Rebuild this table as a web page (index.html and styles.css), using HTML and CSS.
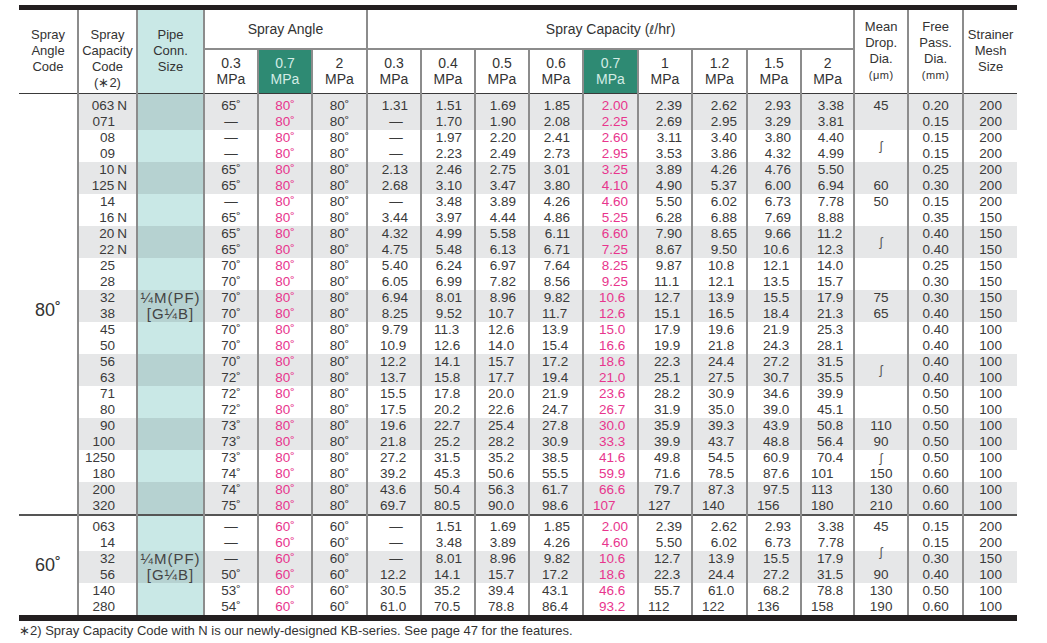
FILE: index.html
```html
<!DOCTYPE html>
<html lang="en">
<head>
<meta charset="utf-8">
<title>Spray nozzle specifications</title>
<link rel="stylesheet" href="styles.css">
</head>
<body>
<div class="sheet">
<table class="spec">
<colgroup>
<col style="width:59px"><col style="width:59px"><col style="width:67px">
<col style="width:54px"><col style="width:54px"><col style="width:55px">
<col style="width:54px"><col style="width:54px"><col style="width:54px"><col style="width:54px">
<col style="width:55px"><col style="width:54px"><col style="width:55px"><col style="width:54px"><col style="width:53px">
<col style="width:54px"><col style="width:55px"><col style="width:54px">
</colgroup>
<thead>
<tr class="h1">
<th rowspan="2" class="rs">Spray<br>Angle<br>Code</th>
<th rowspan="2" class="rs code-h">Spray<br>Capacity<br>Code<br>(∗2)</th>
<th rowspan="2" class="rs pipe-h">Pipe<br>Conn.<br>Size</th>
<th colspan="3" class="grp">Spray Angle</th>
<th colspan="9" class="grp">Spray Capacity (<span class="ell">ℓ</span>/hr)</th>
<th rowspan="2" class="rs">Mean<br>Drop.<br>Dia.<br><span class="unit">(<i class="mu">μ</i>m)</span></th>
<th rowspan="2" class="rs">Free<br>Pass.<br>Dia.<br><span class="unit">(mm)</span></th>
<th rowspan="2" class="rs">Strainer<br>Mesh<br>Size</th>
</tr>
<tr class="h2">
<th>0.3<br>MPa</th><th class="hl">0.7<br>MPa</th><th>2<br>MPa</th>
<th>0.3<br>MPa</th><th>0.4<br>MPa</th><th>0.5<br>MPa</th><th>0.6<br>MPa</th><th class="hl">0.7<br>MPa</th><th>1<br>MPa</th><th>1.2<br>MPa</th><th>1.5<br>MPa</th><th>2<br>MPa</th>
</tr>
</thead>
<tbody class="g80">
<tr class="s">
<td></td><td>063<span class="n">N</span><br>071</td><td></td>
<td>65˚<br>—</td><td>80˚<br>80˚</td><td>80˚<br>80˚</td>
<td>1.31<span class="c">—</span></td><td>1.51<br>1.70</td><td>1.69<br>1.90</td><td>1.85<br>2.08</td>
<td>2.00<br>2.25</td><td>2.39<br>2.69</td><td>2.62<br>2.95</td><td>2.93<br>3.29</td><td>3.38<br>3.81</td>
<td>45<br>&nbsp;</td><td>0.20<br>0.15</td><td>200<br>200</td>
</tr>
<tr>
<td></td><td>08<br>09</td><td></td>
<td>—<br>—</td><td>80˚<br>80˚</td><td>80˚<br>80˚</td>
<td><span class="c">—</span><span class="c">—</span></td><td>1.97<br>2.23</td><td>2.20<br>2.49</td><td>2.41<br>2.73</td>
<td>2.60<br>2.95</td><td>3.11<br>3.53</td><td>3.40<br>3.86</td><td>3.80<br>4.32</td><td>4.40<br>4.99</td>
<td class="mid"><span class="tl">ʃ</span></td><td>0.15<br>0.15</td><td>200<br>200</td>
</tr>
<tr class="s">
<td></td><td>10<span class="n">N</span><br>125<span class="n">N</span></td><td></td>
<td>65˚<br>65˚</td><td>80˚<br>80˚</td><td>80˚<br>80˚</td>
<td>2.13<br>2.68</td><td>2.46<br>3.10</td><td>2.75<br>3.47</td><td>3.01<br>3.80</td>
<td>3.25<br>4.10</td><td>3.89<br>4.90</td><td>4.26<br>5.37</td><td>4.76<br>6.00</td><td>5.50<br>6.94</td>
<td>&nbsp;<br>60</td><td>0.25<br>0.30</td><td>200<br>200</td>
</tr>
<tr>
<td></td><td>14<br>16<span class="n">N</span></td><td></td>
<td>—<br>65˚</td><td>80˚<br>80˚</td><td>80˚<br>80˚</td>
<td><span class="c">—</span>3.44</td><td>3.48<br>3.97</td><td>3.89<br>4.44</td><td>4.26<br>4.86</td>
<td>4.60<br>5.25</td><td>5.50<br>6.28</td><td>6.02<br>6.88</td><td>6.73<br>7.69</td><td>7.78<br>8.88</td>
<td>50<br>&nbsp;</td><td>0.15<br>0.35</td><td>200<br>150</td>
</tr>
<tr class="s">
<td></td><td>20<span class="n">N</span><br>22<span class="n">N</span></td><td></td>
<td>65˚<br>65˚</td><td>80˚<br>80˚</td><td>80˚<br>80˚</td>
<td>4.32<br>4.75</td><td>4.99<br>5.48</td><td>5.58<br>6.13</td><td>6.11<br>6.71</td>
<td>6.60<br>7.25</td><td>7.90<br>8.67</td><td>8.65<br>9.50</td><td>9.66<span class="w">10.6</span></td><td class="tw">11.2<br>12.3</td>
<td class="mid"><span class="tl">ʃ</span></td><td>0.40<br>0.40</td><td>150<br>150</td>
</tr>
<tr>
<td></td><td>25<br>28</td><td></td>
<td>70˚<br>70˚</td><td>80˚<br>80˚</td><td>80˚<br>80˚</td>
<td>5.40<br>6.05</td><td>6.24<br>6.99</td><td>6.97<br>7.82</td><td>7.64<br>8.56</td>
<td>8.25<br>9.25</td><td>9.87<span class="w">11.1</span></td><td class="tw">10.8<br>12.1</td><td class="tw">12.1<br>13.5</td><td class="tw">14.0<br>15.7</td>
<td></td><td>0.25<br>0.30</td><td>150<br>150</td>
</tr>
<tr class="s">
<td class="lab lab80">80˚</td><td>32<br>38</td><td class="pipe">¼M(PF)<br>[G¼B]</td>
<td>70˚<br>70˚</td><td>80˚<br>80˚</td><td>80˚<br>80˚</td>
<td>6.94<br>8.25</td><td>8.01<br>9.52</td><td>8.96<span class="w">10.7</span></td><td>9.82<span class="w">11.7</span></td>
<td class="tw">10.6<br>12.6</td><td class="tw">12.7<br>15.1</td><td class="tw">13.9<br>16.5</td><td class="tw">15.5<br>18.4</td><td class="tw">17.9<br>21.3</td>
<td>75<br>65</td><td>0.30<br>0.40</td><td>150<br>150</td>
</tr>
<tr>
<td></td><td>45<br>50</td><td></td>
<td>70˚<br>70˚</td><td>80˚<br>80˚</td><td>80˚<br>80˚</td>
<td>9.79<span class="w">10.9</span></td><td class="tw">11.3<br>12.6</td><td class="tw">12.6<br>14.0</td><td class="tw">13.9<br>15.4</td>
<td class="tw">15.0<br>16.6</td><td class="tw">17.9<br>19.9</td><td class="tw">19.6<br>21.8</td><td class="tw">21.9<br>24.3</td><td class="tw">25.3<br>28.1</td>
<td></td><td>0.40<br>0.40</td><td>100<br>100</td>
</tr>
<tr class="s">
<td></td><td>56<br>63</td><td></td>
<td>70˚<br>72˚</td><td>80˚<br>80˚</td><td>80˚<br>80˚</td>
<td class="tw">12.2<br>13.7</td><td class="tw">14.1<br>15.8</td><td class="tw">15.7<br>17.7</td><td class="tw">17.2<br>19.4</td>
<td class="tw">18.6<br>21.0</td><td class="tw">22.3<br>25.1</td><td class="tw">24.4<br>27.5</td><td class="tw">27.2<br>30.7</td><td class="tw">31.5<br>35.5</td>
<td class="mid"><span class="tl">ʃ</span></td><td>0.40<br>0.40</td><td>100<br>100</td>
</tr>
<tr>
<td></td><td>71<br>80</td><td></td>
<td>72˚<br>72˚</td><td>80˚<br>80˚</td><td>80˚<br>80˚</td>
<td class="tw">15.5<br>17.5</td><td class="tw">17.8<br>20.2</td><td class="tw">20.0<br>22.6</td><td class="tw">21.9<br>24.7</td>
<td class="tw">23.6<br>26.7</td><td class="tw">28.2<br>31.9</td><td class="tw">30.9<br>35.0</td><td class="tw">34.6<br>39.0</td><td class="tw">39.9<br>45.1</td>
<td></td><td>0.50<br>0.50</td><td>100<br>100</td>
</tr>
<tr class="s">
<td></td><td>90<br>100</td><td></td>
<td>73˚<br>73˚</td><td>80˚<br>80˚</td><td>80˚<br>80˚</td>
<td class="tw">19.6<br>21.8</td><td class="tw">22.7<br>25.2</td><td class="tw">25.4<br>28.2</td><td class="tw">27.8<br>30.9</td>
<td class="tw">30.0<br>33.3</td><td class="tw">35.9<br>39.9</td><td class="tw">39.3<br>43.7</td><td class="tw">43.9<br>48.8</td><td class="tw">50.8<br>56.4</td>
<td>110<br>90</td><td>0.50<br>0.50</td><td>100<br>100</td>
</tr>
<tr>
<td></td><td>1250<br>180</td><td></td>
<td>73˚<br>74˚</td><td>80˚<br>80˚</td><td>80˚<br>80˚</td>
<td class="tw">27.2<br>39.2</td><td class="tw">31.5<br>45.3</td><td class="tw">35.2<br>50.6</td><td class="tw">38.5<br>55.5</td>
<td class="tw">41.6<br>59.9</td><td class="tw">49.8<br>71.6</td><td class="tw">54.5<br>78.5</td><td class="tw">60.9<br>87.6</td><td class="tw">70.4<span class="i">101</span></td>
<td><span class="tl">ʃ</span><br>150</td><td>0.50<br>0.60</td><td>100<br>100</td>
</tr>
<tr class="s">
<td></td><td>200<br>320</td><td></td>
<td>74˚<br>75˚</td><td>80˚<br>80˚</td><td>80˚<br>80˚</td>
<td class="tw">43.6<br>69.7</td><td class="tw">50.4<br>80.5</td><td class="tw">56.3<br>90.0</td><td class="tw">61.7<br>98.6</td>
<td class="tw">66.6<span class="i">107</span></td><td class="tw">79.7<span class="i">127</span></td><td class="tw">87.3<span class="i">140</span></td><td class="tw">97.5<span class="i">156</span></td><td><span class="i">113</span><span class="i">180</span></td>
<td>130<br>210</td><td>0.60<br>0.60</td><td>100<br>100</td>
</tr>
</tbody>
<tbody class="g60">
<tr>
<td></td><td>063<br>14</td><td></td>
<td>—<br>—</td><td>60˚<br>60˚</td><td>60˚<br>60˚</td>
<td><span class="c">—</span><span class="c">—</span></td><td>1.51<br>3.48</td><td>1.69<br>3.89</td><td>1.85<br>4.26</td>
<td>2.00<br>4.60</td><td>2.39<br>5.50</td><td>2.62<br>6.02</td><td>2.93<br>6.73</td><td>3.38<br>7.78</td>
<td>45<br><span class="tl low">ʃ</span></td><td>0.15<br>0.15</td><td>200<br>200</td>
</tr>
<tr class="s">
<td class="lab lab60">60˚</td><td>32<br>56</td><td class="pipe">¼M(PF)<br>[G¼B]</td>
<td>—<br>50˚</td><td>60˚<br>60˚</td><td>60˚<br>60˚</td>
<td><span class="c">—</span><span class="w">12.2</span></td><td>8.01<span class="w">14.1</span></td><td>8.96<span class="w">15.7</span></td><td>9.82<span class="w">17.2</span></td>
<td class="tw">10.6<br>18.6</td><td class="tw">12.7<br>22.3</td><td class="tw">13.9<br>24.4</td><td class="tw">15.5<br>27.2</td><td class="tw">17.9<br>31.5</td>
<td>&nbsp;<br>90</td><td>0.30<br>0.40</td><td>150<br>100</td>
</tr>
<tr>
<td></td><td>140<br>280</td><td></td>
<td>53˚<br>54˚</td><td>60˚<br>60˚</td><td>60˚<br>60˚</td>
<td class="tw">30.5<br>61.0</td><td class="tw">35.2<br>70.5</td><td class="tw">39.4<br>78.8</td><td class="tw">43.1<br>86.4</td>
<td class="tw">46.6<br>93.2</td><td class="tw">55.7<span class="i">112</span></td><td class="tw">61.0<span class="i">122</span></td><td class="tw">68.2<span class="i">136</span></td><td class="tw">78.8<span class="i">158</span></td>
<td>130<br>190</td><td>0.50<br>0.60</td><td>100<br>100</td>
</tr>
</tbody>
</table>
</div>
<p class="note">∗2) Spray Capacity Code with N is our newly-designed KB-series. See page 47 for the features.</p>
</body>
</html>
```

FILE: styles.css
```css
* { box-sizing: border-box; }

body {
  margin: 0;
  padding: 5px 0 0 19px;
  background: #fff;
  color: #383838;
  font-family: "Liberation Sans", Arial, sans-serif;
}

.sheet {
  width: 998px;
  border-top: 5px solid #231f20;
  border-bottom: 6px solid #231f20;
}

.spec {
  width: 998px;
  border-collapse: collapse;
  table-layout: fixed;
}

.spec th,
.spec td {
  padding: 0;
  border-left: 2px solid #8c8c8c;
  text-align: center;
}

.spec thead tr:first-child th:first-child,
.spec tbody td:first-child {
  border-left: 0;
}

/* header */
.spec thead th {
  font-weight: normal;
  font-size: 13px;
  line-height: 16px;
  vertical-align: middle;
  color: #333;
}

.spec .h1 th { height: 39px; }
.spec .h2 th { height: 44px; font-size: 14px; }

.spec thead .grp {
  font-size: 14px;
  border-bottom: 2px solid #8c8c8c;
}

.spec thead .rs,
.spec .h2 th {
  border-bottom: 1px solid #3a3a3a;
}

.spec thead .code-h { padding-top: 16px; }
.spec thead .pipe-h { background: #c9e8e6; }
.spec thead .hl { background: #2e8a73; color: #d3ece5; }

.ell { font-family: "DejaVu Sans", sans-serif; font-size: 12px; }
.unit { font-size: 11px; letter-spacing: 0.5px; }
.mu { font-style: normal; }

/* body */
.spec tbody td {
  font-family: "Liberation Sans Narrow", "Liberation Sans", Arial, sans-serif;
  font-size: 13.5px;
  line-height: 16px;
  vertical-align: top;
  color: #3a3a3a;
}

.spec tbody tr.s td { background: #e6e7e8; }
.spec tbody tr td:first-child { background: #fff; }
.spec tbody tr td:nth-child(3) { background: #c9e8e6; }
.spec tbody tr.s td:nth-child(3) { background: #b6d2d1; }

.spec tbody td:nth-child(2) {
  text-align: right;
  padding-right: 21px;
}

.n {
  margin-left: 3px;
  margin-right: -12px;
}

.spec tbody td:nth-child(5),
.spec tbody td:nth-child(11) {
  color: #e8358d;
}

.spec tbody td:nth-child(n+7):nth-child(-n+10) { --pr: 12px; --pl: 12px; }
.spec tbody td:nth-child(n+11):nth-child(-n+15) { --pr: 9px; --pl: 15px; }

.spec tbody td:nth-child(n+7):nth-child(-n+15) {
  text-align: right;
  padding-right: var(--pr);
}

.spec tbody td.tw:nth-child(n+7) {
  text-align: left;
  padding-left: var(--pl);
  padding-right: 0;
}

span.c, span.w, span.i { display: block; }

span.c {
  text-align: center;
  margin-right: calc(-1 * var(--pr));
  padding-left: 4px;
}

span.w {
  text-align: left;
  padding-left: var(--pl);
}

span.i {
  text-align: left;
  padding-left: 9px;
}

.tw span.i {
  padding-left: 0;
  margin-left: calc(9px - var(--pl));
}

.spec tbody td.mid { padding-top: 8px; }

.tl {
  font-family: "Liberation Sans", sans-serif;
  font-size: 12px;
  color: #555;
}

.low {
  position: relative;
  top: 9px;
}

.spec tbody td.lab {
  font-size: 18px;
  line-height: 20px;
  color: #333;
}

.spec tbody td.lab80 { padding-top: 10px; }
.spec tbody td.lab60 { padding-top: 4px; }

.spec tbody td.pipe {
  font-family: "Liberation Sans", Arial, sans-serif;
  font-size: 15px;
  letter-spacing: 1px;
  color: #444;
}

.g80 tr:first-child td { padding-top: 4px; }

.g60 tr:first-child td {
  border-top: 2px solid #555;
  padding-top: 3px;
}

.note {
  margin: 2px 0 0;
  font-size: 13px;
  line-height: 16px;
  color: #333;
}
```
